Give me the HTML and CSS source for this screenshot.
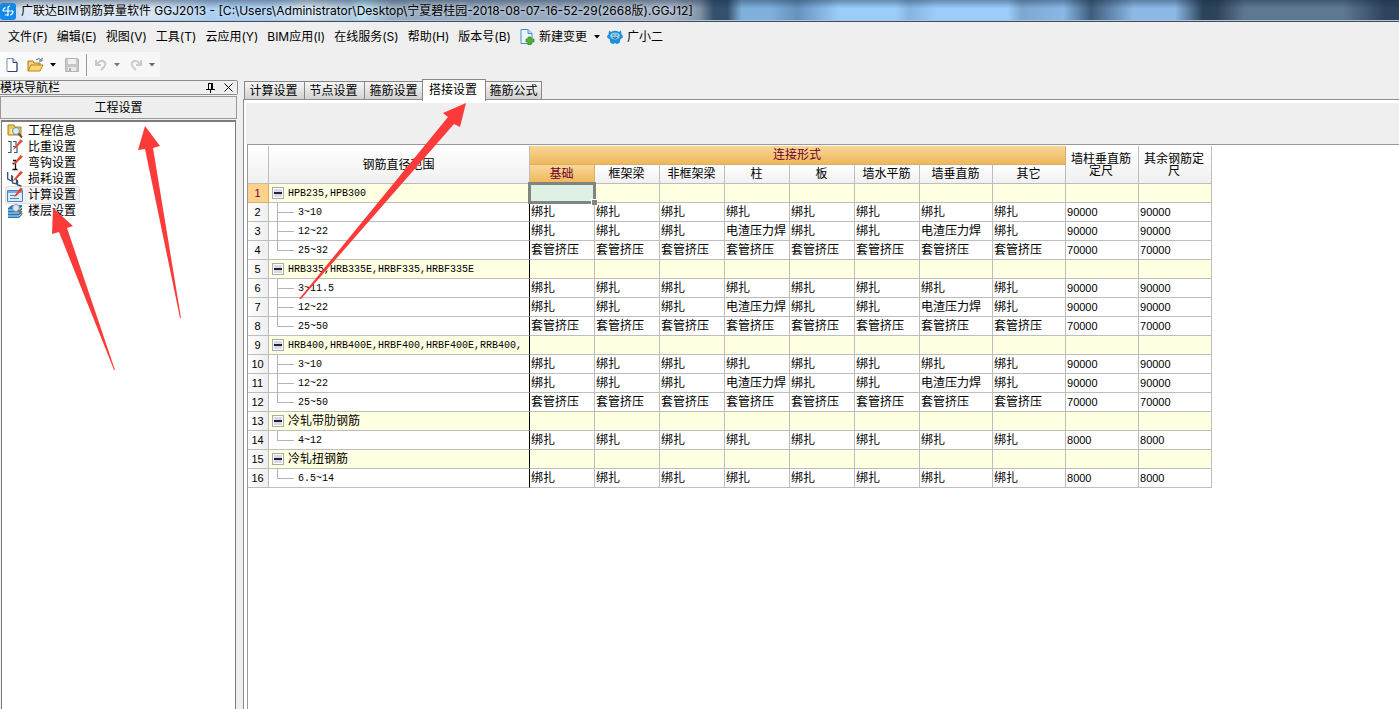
FILE: index.html
```html
<!DOCTYPE html>
<html lang="zh-CN">
<head>
<meta charset="utf-8">
<title>广联达BIM钢筋算量软件 GGJ2013</title>
<link rel="stylesheet" href="styles.css">
</head>
<body>
<div class="app">
  <header class="titlebar">
    <svg class="logo" width="16" height="18" viewBox="0 0 16 18"><rect y="1" width="16" height="17" rx="3" fill="#1689e8"/><path d="M3 9h10M8 14V6q0-2 2-2M5.500 5.500q-2.500 1-2.500 3.500M13 9q0 3.500-3 4M5 13h3" fill="none" stroke="#fff" stroke-width="1.200"/></svg>
    <h1 class="title">广联达BIM钢筋算量软件 GGJ2013 - [C:\Users\Administrator\Desktop\宁夏碧桂园-2018-08-07-16-52-29(2668版).GGJ12]</h1>
  </header>
  <nav class="menu">
    <button>文件(F)</button><button>编辑(E)</button><button>视图(V)</button><button>工具(T)</button><button>云应用(Y)</button><button>BIM应用(I)</button><button>在线服务(S)</button><button>帮助(H)</button><button>版本号(B)</button>
    <button class="with-icon"><svg width="16" height="16" viewBox="0 0 16 16"><path d="M2 .5h7l4 4v10H2z" fill="#edf6fd" stroke="#4a8fc4"/><path d="M9 .5v4h4" fill="#bcdcf2" stroke="#4a8fc4"/><path d="M9 8h3v2h3v3h-3v3H9v-3H7v-3h2z" fill="#4fb52a" stroke="#2f8a1c" stroke-width=".7"/></svg>新建变更<svg class="caret" width="7" height="4" viewBox="0 0 7 4"><path d="M0 0h6L3 3.500z" fill="#000"/></svg></button>
    <button class="with-icon robot"><svg width="16" height="16" viewBox="0 0 16 16"><path d="M2 1.500l2 1.500q4-2.500 8 0l2-1.500.5 4q2 1 1 3.500l-2 1-1 4-3 1-1.500-1-1.500 1-3-1-1-4-2-1q-1-2.500 1-3.500z" fill="#1c8fd8"/><ellipse cx="8" cy="7" rx="5" ry="3.500" fill="#7cc8f4"/><circle cx="5.800" cy="6" r="1.300" fill="#fff"/><circle cx="10.200" cy="6" r="1.300" fill="#fff"/><circle cx="6" cy="6" r=".8" fill="#124"/><circle cx="10" cy="6" r=".8" fill="#124"/><path d="M6 8.500q2 1.500 4 0" fill="none" stroke="#124e80"/></svg>广小二</button>
  </nav>
  <div class="toolbar">
    <button aria-label="新建"><svg width="16" height="16" viewBox="0 0 16 16"><path d="M3 1.500h6l4 4v9H3z" fill="#fff" stroke="#7b90b0"/><path d="M9 1.500v4h4M13 6v8.500H4" fill="none" stroke="#2c4468"/></svg></button>
    <button aria-label="打开"><svg width="18" height="16" viewBox="0 0 18 16"><path d="M1 14V4h5l1 2h6v3" fill="#f6d376" stroke="#a67a1d"/><path d="M1 14l3-6h12l-3 6z" fill="#fbd66b" stroke="#b0832a"/><path d="M9 3q3-3 5 0M15 .8v3.200h-3" fill="none" stroke="#3c6690"/></svg></button>
    <svg class="drop" width="7" height="4" viewBox="0 0 7 4"><path d="M0 0h6L3 3.500z" fill="#000"/></svg>
    <button aria-label="保存"><svg width="16" height="16" viewBox="0 0 16 16"><path d="M1.500 1.500h12l1 1v12h-13z" fill="#c8c8c8" stroke="#b4b4b4"/><path d="M4 2h8v5H4z" fill="#f1f1f1"/><path d="M4 10h8v4H4z" fill="#e9e9e9"/><path d="M6 11v3" stroke="#aaa" stroke-width="2"/></svg></button>
    <span class="sep"></span>
    <button aria-label="撤销"><svg width="16" height="16" viewBox="0 0 16 16"><path d="M3 3v5h5M4 7q3-4 6-3 4 2 1 6l-3 3" fill="none" stroke="#c8c8c8" stroke-width="2"/></svg></button>
    <svg class="drop" width="7" height="4" viewBox="0 0 7 4"><path d="M0 0h6L3 3.500z" fill="#777"/></svg>
    <button aria-label="重做"><svg width="16" height="16" viewBox="0 0 16 16"><path d="M13 3v5H8M12 7q-3-4-6-3-4 2-1 6l3 3" fill="none" stroke="#ccc" stroke-width="2"/></svg></button>
    <svg class="drop" width="7" height="4" viewBox="0 0 7 4"><path d="M0 0h6L3 3.500z" fill="#666"/></svg>
  </div>
  <div class="work">
    <aside class="side">
      <div class="side-head"><span class="side-title">模块导航栏</span>
        <button aria-label="固定"><svg width="9" height="10" viewBox="0 0 9 10"><path d="M2.500 0v6M2 .5h4M5.500 0v6M6.500 0v6M0 6.500h9M4.500 7v3" fill="none" stroke="#000"/></svg></button>
        <button aria-label="关闭"><svg width="9" height="9" viewBox="0 0 9 9"><path d="M.5 .5l8 8M8.500 .5l-8 8" stroke="#000" fill="none"/></svg></button>
      </div>
      <button class="section">工程设置</button>
      <ul class="tree">
        <li><button><svg width="16" height="16" viewBox="0 0 16 16"><path d="M1 2h6l1 2h6v8H1z" fill="#f0c94e" stroke="#a88320"/><path d="M3 6h10v5H3z" fill="#fae9a0"/><circle cx="9" cy="8" r="3.500" fill="#d9ecf8" stroke="#7b8a98"/><path d="M11.500 10.500L15 14.500" stroke="#6b5430" stroke-width="2"/></svg>工程信息</button></li>
        <li><button><svg width="16" height="16" viewBox="0 0 16 16"><path d="M1 2.500h3v11H1M6 2.500h3v4M6 7.500h4v6H7" fill="none" stroke="#3b5878" stroke-width="1.200"/><path d="M7 9l6.500-8.500L16 2 9 9l-3 2z" fill="#e8452e"/></svg>比重设置</button></li>
        <li><button><svg width="16" height="16" viewBox="0 0 16 16"><path d="M6 5.500h2.500v9M5.500 14.500h5M5.500 8.500H8" fill="none" stroke="#111" stroke-width="1.300"/><path d="M7 8l6.500-8L16 1.500 9 8.500 6 10z" fill="#e8452e"/></svg>弯钩设置</button></li>
        <li><button><svg width="16" height="16" viewBox="0 0 16 16"><path d="M.7 1v7l4 2V4M5.500 5v7l4 1V8M10.500 9v5l4 1" fill="none" stroke="#31536f" stroke-width="1.300"/><path d="M7 8l6.500-8L16 1.500 9 8.500 6 10z" fill="#e8452e"/></svg>损耗设置</button></li>
        <li><button class="current"><svg width="16" height="16" viewBox="0 0 16 16"><path d="M.5 3.500h15v11H.5z" fill="#d8eafc" stroke="#4a7fc0"/><path d="M1 4h14v2H1z" fill="#78aee8"/><path d="M3 8.500h5M3 11.500h9" stroke="#5b83b8"/><path d="M8 8l5.500-7.500L16 2l-6 6.500-3 1.500z" fill="#e8452e"/></svg>计算设置</button></li>
        <li><button><svg width="16" height="16" viewBox="0 0 16 16"><path d="M1 5l4-3h10v10l-3 3H1z" fill="#2878b8"/><path d="M1 7h11l3-3M1 10h11l3-3M1 13h11l3-3" fill="none" stroke="#bfe2f7"/><circle cx="9" cy="5" r="3.500" fill="#dbe9f2" stroke="#8798a5"/><path d="M11 7l4 4" stroke="#907146" stroke-width="2"/></svg>楼层设置</button></li>
      </ul>
    </aside>
    <main class="main">
      <div class="tabs" role="tablist">
        <button role="tab">计算设置</button><button role="tab">节点设置</button><button role="tab">箍筋设置</button><button role="tab" class="active" aria-selected="true">搭接设置</button><button role="tab">箍筋公式</button>
      </div>
      <div class="panel">
        <div class="strip"></div>
        <div class="sheet">
          <table class="grid">
            <colgroup><col class="c-num"><col class="c-name"><col class="c-form" span="6"><col class="c-wide" span="4"></colgroup>
            <thead>
              <tr><th rowspan="2"></th><th rowspan="2">钢筋直径范围</th><th colspan="8" class="hot">连接形式</th><th rowspan="2" class="wrap">墙柱垂直筋定尺</th><th rowspan="2" class="wrap">其余钢筋定尺</th></tr>
              <tr><th class="hot">基础</th><th>框架梁</th><th>非框架梁</th><th>柱</th><th>板</th><th>墙水平筋</th><th>墙垂直筋</th><th>其它</th></tr>
            </thead>
            <tbody id="rows"></tbody>
          </table>
        </div>
      </div>
    </main>
  </div>
  <svg class="arrows" width="480" height="380" viewBox="0 0 480 380" aria-hidden="true"><g fill="#fb3a3a"><path d="M466 103L443 113L448 117L299 299L301 299L454 124L460 127z"/><path d="M145 126L138 150L145 149L180 318L181 318L153 148L160 146z"/><path d="M53 208L52 234L59 232L114 370L115 370L67 228L73 226z"/></g></svg>
</div>
<script src="grid.js"></script>
</body>
</html>
```
FILE: styles.css
```css
* { box-sizing: border-box; }
body { margin: 0; background: #efefef; color: #000; font: 12px/16px "Liberation Sans", "Noto Sans CJK SC", sans-serif; overflow: hidden; }
button { margin: 0; padding: 0; border: 0; background: none; color: inherit; font: inherit; white-space: nowrap; }
svg { display: block; flex: none; }
.app { position: relative; display: flex; flex-direction: column; min-height: 100vh; }

.titlebar {
  display: flex; align-items: center; gap: 5px; height: 22px; border-bottom: 1px solid #3d4d63; box-shadow: inset 0 -1px #b5c3d3;
  background:
    linear-gradient(rgba(20,40,65,.4), rgba(20,40,65,0) 40%),
    linear-gradient(90deg, #b9cde4 0, #dde8f5 2%, #d3e2f3 11%, #a9cdf2 15%, #a9cdf2 19%, #d5e4f0 22%, #aac7df 25%, #b9e2f5 26%, #93a9bf 28%, #98aac0 40%, #a5b3c5 48%, #8193a8 50%, #34506c 51%, #34506c 52%, #7fb0dc 53%, #7fb0dc 55%, #6692bd 57%, #9bcdfb 60%, #9bcdfb 64%, #86b4e0 65%, #9ccdfd 67%, #9ccdfd 72%, #7ca7d0 73%, #8ab8e6 76%, #3e5d7c 78%, #8bb8e4 81%, #8bb8e4 84%, #2b4259 86%, #2e4459 87%, #5f7891 89%, #5f7891 96%, #2d445c 99%);
}
.title { margin: 0; font: 12px/18px Inter, "Noto Sans CJK SC", sans-serif; white-space: nowrap; text-shadow: 0 0 5px rgba(255,255,255,.8); }

.menu { display: flex; align-items: center; gap: 9px; height: 30px; padding-left: 8px; font-family: Inter, "Noto Sans CJK SC", sans-serif; }
.with-icon { display: flex; align-items: center; gap: 4px; margin-left: -1px; }
.menu .robot { margin-left: -3px; }
.caret { margin-left: 3px; }

.toolbar { display: flex; align-items: center; gap: 4px; width: 160px; height: 25px; padding-left: 4px; background: linear-gradient(90deg, #fbfbfb, #f6f6f6); }
.toolbar .sep { width: 1px; height: 22px; margin: 0 2px; background: #999; }
.toolbar button + button { margin-left: 3px; }
.toolbar .sep + button { margin-left: 0; }
.toolbar .drop { margin: 0 3px 0 1px; }

.work { display: flex; gap: 5px; flex: 1; }
.side { display: flex; flex-direction: column; width: 238px; flex: none; padding-top: 3px; }
.side-head { display: flex; align-items: center; gap: 9px; height: 15px; padding-right: 4px; border: 1px solid #8c8c8c; border-left: 0; border-radius: 0 2px 2px 0; }
.side-title { flex: 1; }
.section { height: 23px; margin: 1px 1px 0 0; border: 1px solid #999; background: #eee; }
.tree { flex: 1; margin: 1px 2px 0 1px; padding: 1px 0 0 4px; border: 1px solid #7c7c7c; border-bottom: 0; border-top-width: 2px; background: #fff; list-style: none; }
.tree li { height: 16px; }
.tree button { display: flex; align-items: center; gap: 5px; height: 16px; padding: 0 3px 0 1px; }
.tree .current { border-radius: 2px; box-shadow: 0 0 0 1px #ddd; background: #f3f3f3; }

.main { display: flex; flex-direction: column; flex: 1; min-width: 0; padding-top: 2px; }
.tabs { display: flex; align-items: flex-end; height: 20px; padding-left: 1px; }
.tabs button { height: 18px; padding: 0 6px 0 4px; border: 1px solid #888; border-width: 1px 1px 0 1px; margin-right: -1px; flex: 0 0 61px; background: linear-gradient(#f6f6f6, #d2d2d2); }
.tabs .active { flex-basis: 64px; height: 22px; margin-bottom: -2px; margin-left: -2px; padding-bottom: 2px; background: #fff; z-index: 1; }
.tabs .active + button { flex-basis: 57px; padding: 0 3px; }
.panel { display: flex; flex-direction: column; flex: 1; padding: 3px 0 0 2px; border: 1px solid #8c8c8c; border-width: 1px 0 0 1px; background: #fff; }
.strip { height: 41px; background: #efefef; }
.sheet { flex: 1; padding-top: 1px; border: 1px solid #999; border-width: 1px 0 0 1px; margin-left: 1px; }

.grid { width: 964px; border-collapse: separate; border-spacing: 0; table-layout: fixed; }
.c-num { width: 21px; }
.c-name { width: 261px; }
.c-form { width: 65px; }
.c-wide { width: 73px; }
.grid th, .grid td { height: 19px; padding: 0 0 0 1px; border: 1px solid #bdbdbd; border-width: 0 1px 1px 0; line-height: 18px; white-space: nowrap; font-weight: 400; }
.grid th { padding: 0 1px 0 0; background: linear-gradient(#fff, #f0f0f0); text-align: center; }
.grid th.wrap { padding: 0 6px 0 4px; line-height: 12px; white-space: normal; }
.grid th.hot { background: linear-gradient(#f9d698, #efb75a); border-color: #d9ae68; color: #6b0030; }
.grid tbody th { background: linear-gradient(90deg, #fff, #eee); font-size: 11px; }
.grid tbody th.hot { background: #fcd18b; }
.grid .num { font-size: 11px; }
.grid .group td { background: #ffffe1; }
.grid td.name { padding: 0; border-right-color: #000; font-family: "Liberation Mono", "Noto Sans CJK SC", monospace; font-size: 10px; }
.grid tr:first-child td.name { border-right-color: #bdbdbd; }
.node { display: flex; align-items: center; height: 18px; padding-left: 3px; gap: 4px; }
.node .label { padding-top: 2px; font-size: 10px; line-height: 16px; }
.node .cjk { font-size: 12px; }
.fold { display: flex; align-items: center; justify-content: center; width: 12px; height: 12px; border: 1px solid #aaa; box-shadow: inset 0 0 0 1px #fff; background: #d8dbe6; }
.leaf { padding-left: 8px; }
.twig { width: 17px; height: 19px; margin-bottom: -1px; background: linear-gradient(#b4b4b4, #b4b4b4) 0 0 / 1px 100% no-repeat, linear-gradient(#b4b4b4, #b4b4b4) 0 9px / 17px 1px no-repeat; }
.twig.last { background-size: 1px 10px, 17px 1px; }
.grid .group td.picked { position: relative; background: #dff0e4; }
.picked::before { content: ""; position: absolute; z-index: 1; inset: -2px; border: 3px solid #808580; }
.picked::after { content: ""; position: absolute; z-index: 2; right: -3px; bottom: -3px; width: 5px; height: 5px; border: 1px solid #fff; border-width: 1px 0 0 1px; background: #808580; }

.arrows { position: absolute; left: 0; top: 0; z-index: 5; pointer-events: none; }
```
FILE: grid.js
```js
const tie = "绑扎", press = "套管挤压", weld = "电渣压力焊";
const groups = [
  ["HPB235,HPB300", ["3~10", "12~22", "25~32"]],
  ["HRB335,HRB335E,HRBF335,HRBF335E", ["3~11.5", "12~22", "25~50"]],
  ["HRB400,HRB400E,HRBF400,HRBF400E,RRB400,", ["3~10", "12~22", "25~50"]],
  ["冷轧带肋钢筋", ["4~12"]],
  ["冷轧扭钢筋", ["6.5~14"]]
];
const minus = '<svg width="8" height="2" viewBox="0 0 8 2"><path d="M0 1h8" stroke="#223" stroke-width="2"/></svg>';
let n = 0, html = "";
for (const [name, kids] of groups) {
  n++;
  const cjk = name.startsWith("冷") ? " cjk" : "";
  html += `<tr class="group"><th class="${n === 1 ? "hot" : ""}">${n}</th><td class="name"><div class="node"><button class="fold" aria-label="折叠">${minus}</button><span class="label${cjk}">${name}</span></div></td>`;
  for (let c = 0; c < 10; c++) html += n === 1 && c === 0 ? '<td class="picked"></td>' : "<td></td>";
  html += "</tr>";
  kids.forEach((kid, i) => {
    n++;
    const forms = Array(8).fill(i === 2 ? press : tie);
    if (i === 1) forms[3] = forms[6] = weld;
    const len = kids.length === 1 ? "8000" : i === 2 ? "70000" : "90000";
    const last = i === kids.length - 1 ? " last" : "";
    html += `<tr><th>${n}</th><td class="name"><div class="node leaf"><span class="twig${last}"></span><span class="label">${kid}</span></div></td>`;
    html += forms.map(f => `<td>${f}</td>`).join("") + `<td class="num">${len}</td><td class="num">${len}</td></tr>`;
  });
}
document.getElementById("rows").innerHTML = html;
```
